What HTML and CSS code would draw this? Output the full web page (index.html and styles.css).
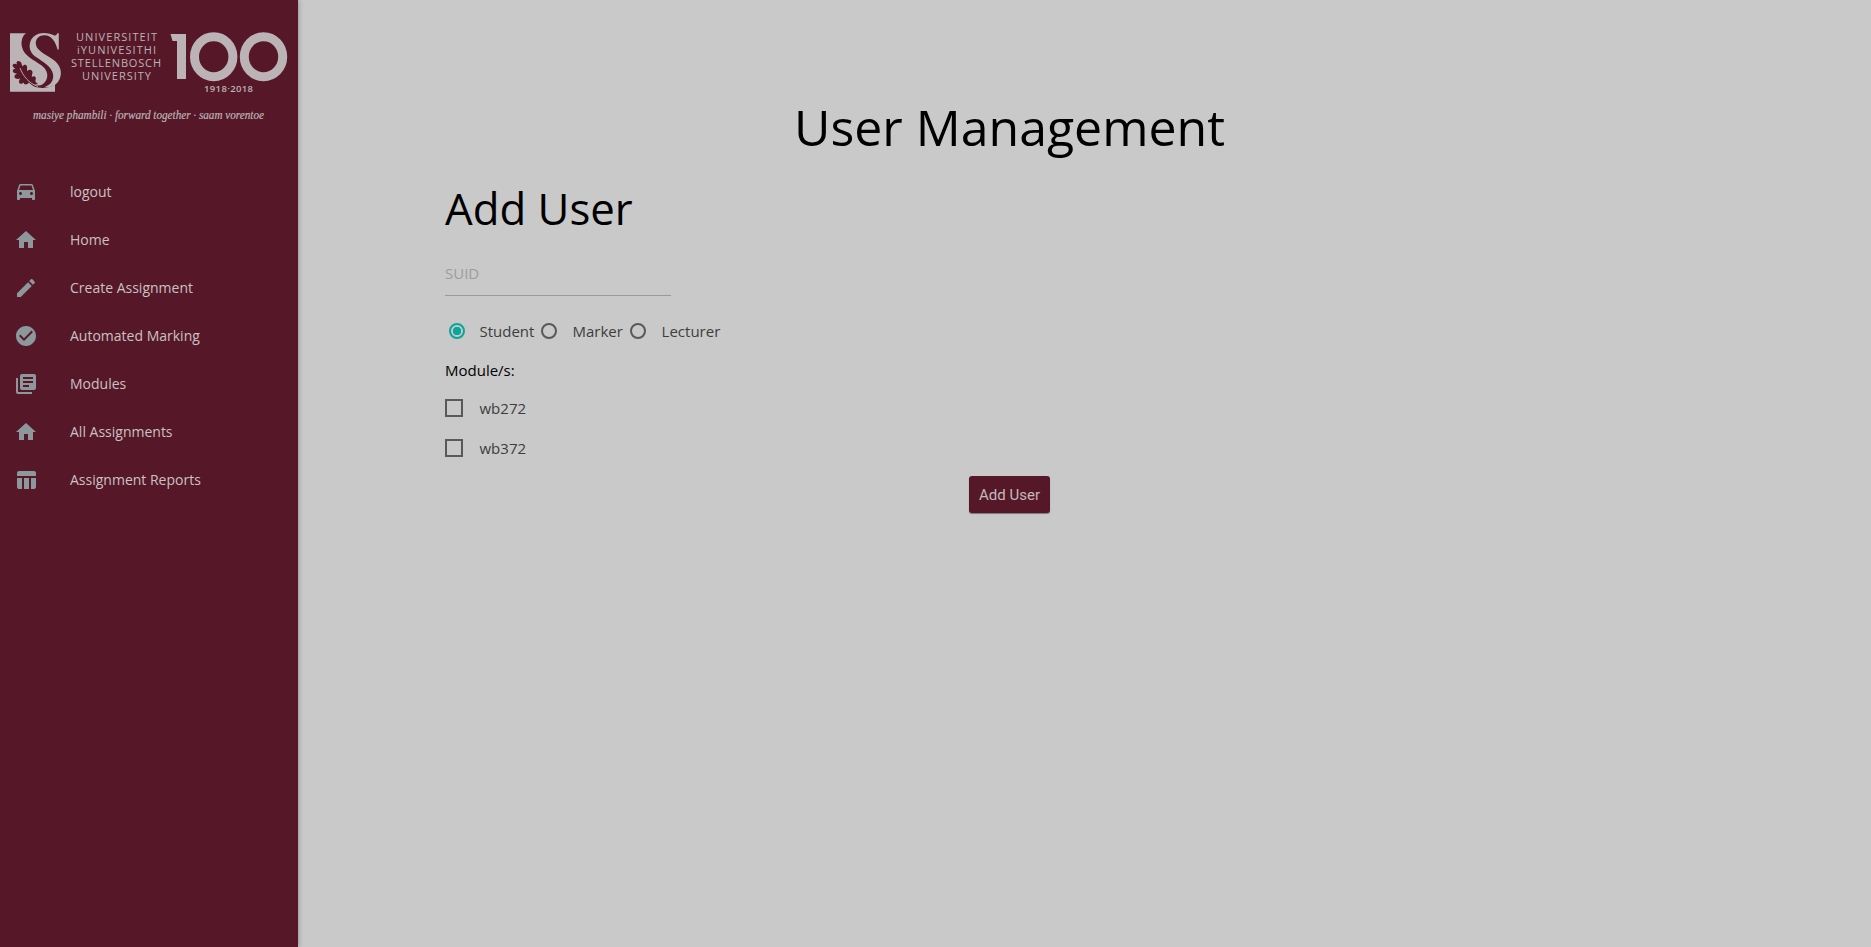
FILE: index.html
```html
<!DOCTYPE html>
<html lang="en">
<head>
<meta charset="utf-8">
<title>User Management</title>
<link rel="stylesheet" href="styles.css">
</head>
<body>
<aside class="drawer">
  <svg class="logo" width="298" height="130" viewBox="0 0 298 130">
    <path class="fill" d="M10 33.300H26C22 36 20.800 42 22 47C24 56 34 60 41 65C48 70 49 77 45 82C43 84.500 41 85.500 39 85.500C33 85 28 81 23 73C27 81 31 86.500 38 87.500C44 88.500 51 87.500 55 84.500V91.700H10Z"/>
    <path class="fill" d="M58.800 33.300V49.500H57.500C55.500 41 51 35.300 44.500 35.300C38 35.300 35 40 36 45C37.500 52 48 55 55 61C62 67 62.500 76 58 82C55 86 50 88 44 87.300C51 85 54 80 53 74C51.500 66 43 62 36 57C31 53.500 29 49 29.800 44C31 37 36.500 33 43.500 33C48.500 33 51.500 34.300 54 35.300C55.800 36 56.800 35 57.200 33.300Z"/>
    <path class="leaf" d="M12.500 65C14 63 16 63.500 17 64.500C15.500 61.500 18 60 20 61.500C22 62.500 21.500 65 22.500 66.500C23.500 64 26.500 64 27 66.500C27.500 68.500 26.500 70 27.500 71C29.500 68.500 33 70 32.500 73C32 75 31.500 76 32 77C34 75 37 77 35.500 80C35 81.500 36 82.500 38 84C35 85 31 84 29 82.500C27 85 24 85 23.500 82.500C22 84.500 18.500 84 19 81.500C19 80 20 79.500 20 78.500C17.500 79.500 14 78.500 14.500 76C15 74.500 16.500 74.500 17 73.500C14.500 73.500 12 72 13 70C13.500 69 14.500 69 15.500 68.500C14 68 12.500 67 12.500 65Z"/>
    <path class="vein" d="M20 68C23 76 29 83.500 38 86.500"/>
    <g class="mark">
      <text x="76" y="41" textLength="81">UNIVERSITEIT</text>
      <text x="77" y="54" textLength="79">iYUNIVESITHI</text>
      <text x="71" y="66.500" textLength="90">STELLENBOSCH</text>
      <text x="82" y="79.500" textLength="69">UNIVERSITY</text>
    </g>
    <path class="fill" d="M170.500 34H186V79H177V41H172.500Z"/>
    <ellipse class="ring" cx="213.700" cy="56.700" rx="19.200" ry="20"/>
    <ellipse class="ring" cx="263.500" cy="56.700" rx="19.200" ry="20"/>
    <text class="years" x="204" y="91.700" textLength="49">1918·2018</text>
    <text class="motto" x="33" y="119" textLength="231" lengthAdjust="spacingAndGlyphs">masiye phambili · forward together · saam vorentoe</text>
  </svg>
  <nav class="menu">
    <a class="item"><svg viewBox="0 0 24 24"><path d="M18.920 5.010C18.720 4.420 18.160 4 17.500 4h-11c-.66 0-1.210.42-1.420 1.010L3 11v8c0 .55.45 1 1 1h1c.55 0 1-.45 1-1v-1h12v1c0 .55.45 1 1 1h1c.55 0 1-.45 1-1v-8l-2.080-5.990zM6.500 15c-.83 0-1.500-.67-1.500-1.500S5.670 12 6.500 12s1.500.67 1.500 1.500S7.330 15 6.500 15zm11 0c-.83 0-1.500-.67-1.500-1.500s.67-1.500 1.500-1.500 1.500.67 1.500 1.500-.67 1.500-1.500 1.500zM5 10l1.500-4.500h11L19 10H5z"/></svg>logout</a>
    <a class="item"><svg viewBox="0 0 24 24"><path d="M10 20v-6h4v6h5v-8h3L12 3 2 12h3v8z"/></svg>Home</a>
    <a class="item"><svg viewBox="0 0 24 24"><path d="M3 17.250V21h3.750L17.810 9.940l-3.750-3.750L3 17.250zM20.710 7.040c.39-.39.39-1.020 0-1.410l-2.340-2.340c-.39-.39-1.020-.39-1.410 0l-1.830 1.830 3.750 3.750 1.830-1.830z"/></svg>Create Assignment</a>
    <a class="item"><svg viewBox="0 0 24 24"><path d="M12 2C6.480 2 2 6.480 2 12s4.480 10 10 10 10-4.480 10-10S17.520 2 12 2zm-2 15l-5-5 1.410-1.410L10 14.170l7.590-7.590L19 8l-9 9z"/></svg>Automated Marking</a>
    <a class="item"><svg viewBox="0 0 24 24"><path d="M4 6H2v14c0 1.100.9 2 2 2h14v-2H4V6zm16-4H8c-1.100 0-2 .9-2 2v12c0 1.100.9 2 2 2h12c1.100 0 2-.9 2-2V4c0-1.100-.9-2-2-2zm-1 9H9V9h10v2zm-4 4H9v-2h6v2zm4-8H9V5h10v2z"/></svg>Modules</a>
    <a class="item"><svg viewBox="0 0 24 24"><path d="M10 20v-6h4v6h5v-8h3L12 3 2 12h3v8z"/></svg>All Assignments</a>
    <a class="item"><svg viewBox="0 0 24 24"><path d="M10 10.020h5V21h-5zM17 21h3c1.100 0 2-.9 2-2v-9h-5v11zm3-18H5c-1.100 0-2 .9-2 2v3h19V5c0-1.100-.9-2-2-2zM3 19c0 1.100.9 2 2 2h3V10H3v9z"/></svg>Assignment Reports</a>
  </nav>
</aside>
<main class="content">
  <h1 class="title">User Management</h1>
  <h2 class="subtitle">Add User</h2>
  <input class="suid" type="text" placeholder="SUID">
  <div class="roles">
    <label class="role on"><i class="dot"></i>Student</label>
    <label class="role"><i class="dot"></i>Marker</label>
    <label class="role"><i class="dot"></i>Lecturer</label>
  </div>
  <p class="caption">Module/s:</p>
  <label class="check"><i class="box"></i>wb272</label>
  <label class="check"><i class="box"></i>wb372</label>
  <button class="submit">Add User</button>
</main>
</body>
</html>
```
FILE: styles.css
```css
* { box-sizing: border-box; }
body { margin: 0; display: flex; height: 947px; overflow: hidden; background: #c9c9c9; font-family: "Open Sans", sans-serif; color: #000; }
.drawer { flex: none; width: 298px; height: 947px; background: #561828; box-shadow: 0 0 5px rgba(0,0,0,.35); }
.logo { display: block; }
.fill { fill: #bbb3b6; }
.leaf { fill: #561828; }
.vein { fill: none; stroke: #bbb3b6; stroke-width: .9; }
.ring { fill: none; stroke: #bbb3b6; stroke-width: 9; }
.mark { fill: #bbb3b6; font: 500 11px "Open Sans", sans-serif; }
.years { fill: #bbb3b6; font: 600 9.500px "Open Sans", sans-serif; }
.motto { fill: #bbb3b6; font: italic 12px "Liberation Serif", serif; stroke: #bbb3b6; stroke-width: .2; }
.menu { padding-top: 38px; }
.item { display: flex; align-items: center; gap: 32px; height: 48px; padding: 0 0 2px 14px; font: 14px "Open Sans", sans-serif; color: #c9c1c4; }
.item svg { width: 24px; height: 24px; margin-top: 2px; fill: #8d989c; }
.content { flex: 1; display: flex; flex-direction: column; align-items: flex-start; padding: 97px 297px 0 147px; }
.title { align-self: center; margin: 0; font-size: 50px; font-weight: 400; line-height: 60px; }
.subtitle { margin: 27px 0 0; font-size: 43.750px; font-weight: 400; line-height: 48px; }
.suid { width: 226px; height: 46px; margin-top: 18px; padding: 0; border: 0; border-bottom: 1px solid #999; background: none; font: 15px "Open Sans", sans-serif; border-radius: 0; }
.suid::placeholder { color: #9d9d9d; opacity: 1; }
.roles { display: flex; margin: 23px 0 0 4px; }
.role { display: flex; align-items: center; gap: 15.500px; height: 24px; margin-right: 7.300px; font-size: 15px; color: #3d3d3d; }
.role.on { gap: 14.500px; margin-right: 6.500px; }
.dot { width: 16px; height: 16px; border: 2px solid #595959; border-radius: 50%; }
.on .dot { border-color: #0aa699; background: radial-gradient(circle, #0aa699 4px, transparent 4.500px); }
.caption { margin: 15px 0 6px; font-size: 15px; line-height: 24px; }
.check { display: flex; align-items: center; gap: 16.500px; height: 40px; font-size: 15px; color: #3d3d3d; }
.box { width: 18px; height: 18px; border: 2px solid #595959; }
.submit { align-self: center; width: 81.500px; height: 37px; margin-top: 8px; border: 0; border-radius: 3px; background: #561828; box-shadow: 0 1px 1px rgba(0,0,0,.4); color: #c2babd; font: 15px Roboto, sans-serif; padding: 0; }
```
